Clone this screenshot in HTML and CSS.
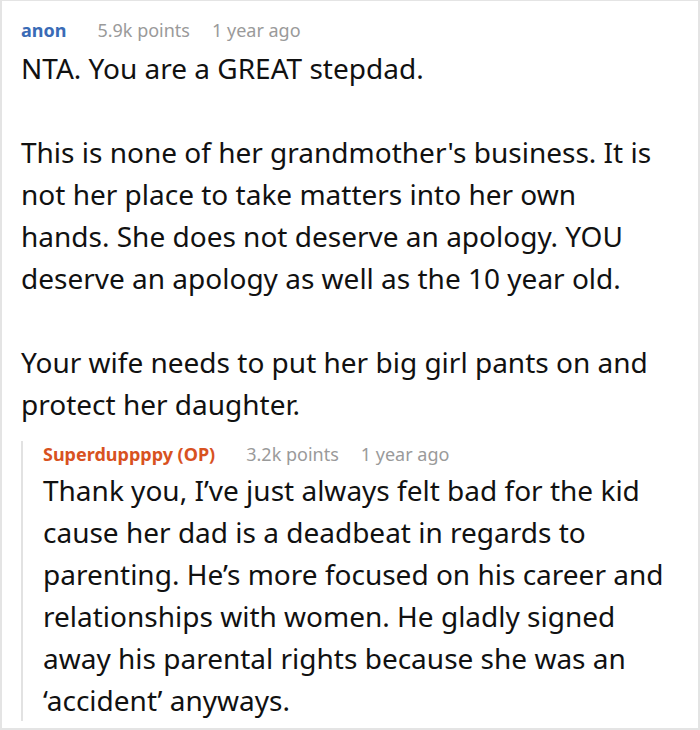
FILE: index.html
```html
<!DOCTYPE html>
<html>
<head>
<meta charset="utf-8">
<link rel="stylesheet" href="styles.css">
</head>
<body>
<div class="frame">
  <div class="comment">
    <div class="meta">
      <span class="author">anon</span>
      <span class="points">5.9k points</span>
      <span class="time">1 year ago</span>
    </div>
    <div class="text parent-text">
      <p>NTA. You are a GREAT stepdad.</p>
      <p>This is none of her grandmother's business. It is not her place to take matters into her own hands. She does not deserve an apology. YOU deserve an apology as well as the 10 year old.</p>
      <p>Your wife needs to put her big girl pants on and protect her daughter.</p>
    </div>
    <div class="reply">
      <div class="meta">
        <span class="author op">Superduppppy (OP)</span>
        <span class="points">3.2k points</span>
        <span class="time">1 year ago</span>
      </div>
      <div class="text">
        <p>Thank you, I’ve just always felt bad for the kid cause her dad is a deadbeat in regards to parenting. He’s more focused on his career and relationships with women. He gladly signed away his parental rights because she was an ‘accident’ anyways.</p>
      </div>
    </div>
  </div>
</div>
</body>
</html>
```
FILE: styles.css
```css
html, body {
  margin: 0;
  padding: 0;
  background: #fff;
}
.frame {
  width: 700px;
  height: 730px;
  box-sizing: border-box;
  border: 2px solid #e4e4e4;
  border-top-width: 1px;
  overflow: hidden;
  font-family: "Noto Sans", "Open Sans", sans-serif;
  color: #111;
}
.comment {
  padding: 16px 19px 0 19px;
}
.meta {
  font-size: 18px;
  line-height: 26px;
  display: flex;
}
.author {
  font-weight: bold;
  color: #3a6bb6;
  margin-right: 31px;
}
.author.op {
  color: #d8521f;
}
.points {
  color: #9a9a9a;
  margin-right: 22px;
}
.time {
  color: #9a9a9a;
}
.text {
  font-size: 28px;
  line-height: 42px;
  margin-top: 4px;
}
.parent-text {
  margin-right: 15px;
}
.text p {
  margin: 0 0 42px 0;
}
.text p:last-child {
  margin-bottom: 0;
}
.reply {
  margin-top: 27px;
  border-left: 2px solid #e2e2e2;
  padding-left: 20px;
}
.reply .meta {
  margin-top: -11px;
}
.reply .text {
  margin-top: 2px;
}
.reply .text p:last-child {
  margin-bottom: -9px;
}
```
